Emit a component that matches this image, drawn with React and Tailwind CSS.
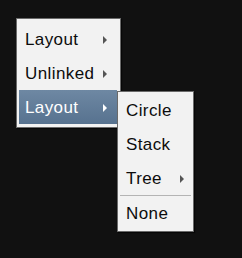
import React from 'react';

const mainItems = [
    { label: 'Layout', sub: true },
    { label: 'Unlinked', sub: true },
    { label: 'Layout', sub: true, active: true },
];

const subItems = [
    { label: 'Circle' },
    { label: 'Stack' },
    { label: 'Tree', sub: true, divider: true },
    { label: 'None' },
];

const Arrow = ({ light }) => (
    <svg width="4" height="8" viewBox="0 0 4 8" className="shrink-0">
        <path d="M0 0 L4 4 L0 8 Z" fill={light ? '#ffffff' : '#555555'} />
    </svg>
);

const SubMenu = () => (
    <div className="absolute left-[98px] top-[1px] z-10 w-[77px] border border-[#6a6a6a] bg-[#f2f2f2] py-[1px] shadow-[1px_1px_1px_rgba(0,0,0,0.6)]">
        {subItems.map((item) => (
            <React.Fragment key={item.label}>
                <div className="flex h-[34px] items-center justify-between pl-[8px] pr-[9px] pt-[1px] text-[#0c0c0c]">
                    <span>{item.label}</span>
                    {item.sub && <Arrow />}
                </div>
                {item.divider && <div className="mx-[2px] h-px bg-[#b4b4b4]" />}
            </React.Fragment>
        ))}
    </div>
);

export default function App() {
    return (
        <div className="h-[258px] w-[242px] bg-[#111111] pl-[16px] pt-[18px] font-['Liberation_Sans',Arial,sans-serif] text-[17px] tracking-[0.4px]">
            <div className="w-[105px] border border-[#6a6a6a] bg-[#f2f2f2] py-[3px] pl-[2px] pr-[3px] shadow-[1px_1px_1px_rgba(0,0,0,0.6)]">
                {mainItems.map((item, i) => (
                    <div
                        key={i}
                        className={`relative flex h-[34px] items-center justify-between pl-[6px] pr-[10px] pt-[1px] ${item.active
                            ? 'bg-gradient-to-b from-[#6e88a3] to-[#57728f] text-white'
                            : 'text-[#0c0c0c]'
                            }`}
                    >
                        <span>{item.label}</span>
                        {item.sub && <Arrow light={item.active} />}
                        {item.active && <SubMenu />}
                    </div>
                ))}
            </div>
        </div>
    );
}
